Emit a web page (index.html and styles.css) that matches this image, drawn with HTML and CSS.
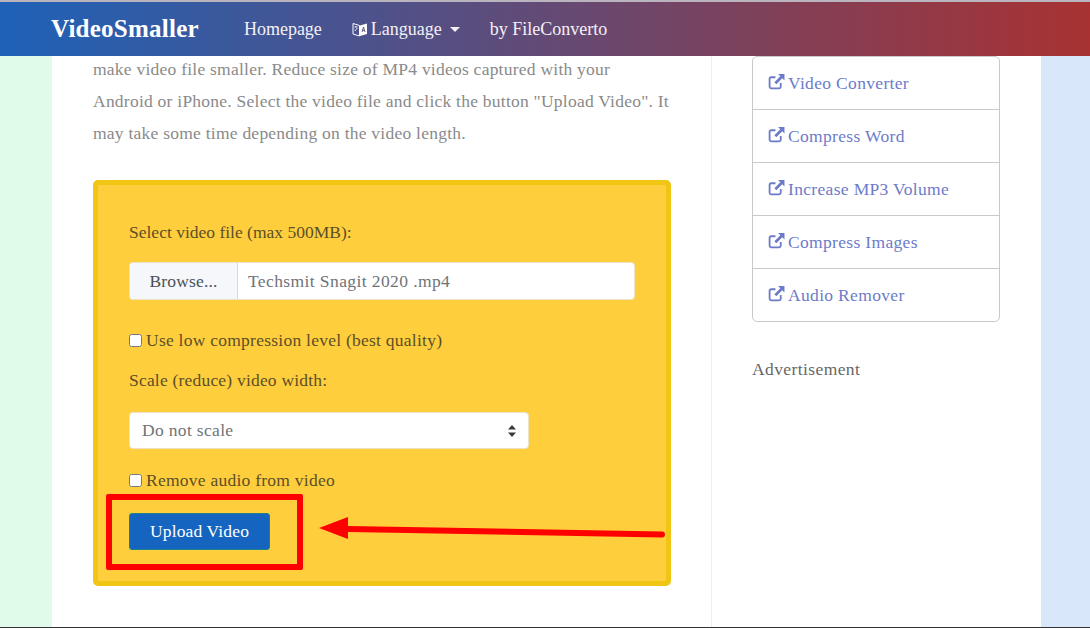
FILE: index.html
```html
<!DOCTYPE html>
<html lang="en">
<head>
    <meta charset="UTF-8">
    <title>VideoSmaller</title>
    <link rel="stylesheet" href="styles.css">
</head>
<body>
    <nav class="navbar">
        <a class="brand">VideoSmaller</a>
        <a class="nav-link">Homepage</a>
        <a class="nav-link lang-link">
            <svg class="lang-icon" viewBox="0 0 16 16" width="16" height="16">
                <path d="M1 2.5 L7.5 4.5 V15 L1 13 Z" fill="none" stroke="#fff" stroke-width="1"/>
                <path d="M8 4.5 L15 2.5 V13 L8 15 Z" fill="#fff"/>
                <path d="M2.5 6 h3 M4 5 v1 M2.8 10 l2.5 -3" fill="none" stroke="#fff" stroke-width="0.9"/>
                <path d="M10 11 l1.5 -5 l1.5 5 M10.6 9.4 h1.9" fill="none" stroke="#5a4a80" stroke-width="0.9"/>
            </svg>
            Language <span class="caret"></span>
        </a>
        <a class="nav-link">by FileConverto</a>
    </nav>

    <div class="page">
        <div class="side side-green"></div>

        <div class="center">
            <main class="main">
                <p class="intro">make video file smaller. Reduce size of MP4 videos captured with your<br>
                Android or iPhone. Select the video file and click the button "Upload Video". It<br>
                may take some time depending on the video length.</p>

                <form class="upload-card">
                    <label class="field-label">Select video file (max 500MB):</label>
                    <div class="file-input">
                        <span class="file-btn">Browse...</span>
                        <span class="file-name">Techsmit Snagit 2020 .mp4</span>
                    </div>

                    <label class="check-row"><input type="checkbox">Use low compression level (best quality)</label>

                    <label class="field-label scale-label">Scale (reduce) video width:</label>
                    <div class="select-box">
                        <span>Do not scale</span>
                        <svg viewBox="0 0 8 12" width="8" height="12">
                            <path d="M4 0 L8 4.5 H0 Z M4 12 L0 7.5 H8 Z" fill="#343a40"/>
                        </svg>
                    </div>

                    <label class="check-row audio-row"><input type="checkbox">Remove audio from video</label>

                    <button type="button" class="upload-btn">Upload Video</button>
                </form>
            </main>

            <aside class="sidebar">
                <ul class="link-list">
                    <li><a><svg class="ext-icon" viewBox="0 0 16 16"><use href="#ext"/></svg>Video Converter</a></li>
                    <li><a><svg class="ext-icon" viewBox="0 0 16 16"><use href="#ext"/></svg>Compress Word</a></li>
                    <li><a><svg class="ext-icon" viewBox="0 0 16 16"><use href="#ext"/></svg>Increase MP3 Volume</a></li>
                    <li><a><svg class="ext-icon" viewBox="0 0 16 16"><use href="#ext"/></svg>Compress Images</a></li>
                    <li><a><svg class="ext-icon" viewBox="0 0 16 16"><use href="#ext"/></svg>Audio Remover</a></li>
                </ul>
                <p class="ad-label">Advertisement</p>
            </aside>
        </div>

        <div class="side side-blue"></div>
    </div>

    <!-- annotation drawn on top of the screenshot -->
    <div class="mark-box"></div>
    <svg class="mark-arrow" viewBox="0 0 360 30" width="360" height="30">
        <path d="M30 14 L344 19.5" fill="none" stroke="#f00" stroke-width="6" stroke-linecap="round"/>
        <path d="M1 13 L30 2 V24 Z" fill="#f00"/>
    </svg>
    <div class="bottom-line"></div>

    <svg width="0" height="0" class="defs">
        <symbol id="ext" viewBox="0 0 16 16">
            <path d="M12 9.5 V13 a1.5 1.5 0 0 1 -1.5 1.5 H3 A1.5 1.5 0 0 1 1.5 13 V5.5 A1.5 1.5 0 0 1 3 4 H7" fill="none" stroke="currentColor" stroke-width="1.7"/>
            <path d="M9.5 1 H15.5 V7 L13.4 4.9 L7.8 10.5 L6 8.7 L11.6 3.1 Z" fill="currentColor"/>
        </symbol>
    </svg>
</body>
</html>
```

FILE: styles.css
```css
* {
    margin: 0;
    padding: 0;
    box-sizing: border-box;
}

html, body {
    height: 628px;
    overflow: hidden;
}

body {
    font-family: 'Liberation Serif', 'Times New Roman', serif;
    font-size: 17.5px;
    background: white;
    position: relative;
}

.navbar {
    position: relative;
    z-index: 2;
    height: 56px;
    border-top: 2px solid #b9b4bd;
    background: linear-gradient(90deg, #1e62b8 0%, #a83232 100%);
    display: flex;
    align-items: center;
    padding-left: 51px;
    color: white;
}

.brand {
    font-size: 25px;
    font-weight: 700;
    letter-spacing: 0.25px;
    margin-right: 45px;
}

.nav-link {
    font-size: 18px;
    margin-right: 30px;
    color: #f4f0f6;
}

.lang-link {
    display: flex;
    align-items: center;
}

.lang-icon {
    margin-right: 3px;
}

.caret {
    display: inline-block;
    margin-left: 8px;
    border-top: 5px solid #f4f0f6;
    border-left: 5px solid transparent;
    border-right: 5px solid transparent;
}

.page {
    display: flex;
    height: 572px;
}

.side-green {
    width: 52px;
    background: #e0fbe9;
}

.side-blue {
    width: 49px;
    background: #d9e7fa;
}

.center {
    width: 989px;
    display: flex;
    background: white;
}

.main {
    width: 660px;
    padding-left: 41px;
    padding-right: 40px;
    border-right: 1px solid #eeeeee;
}

.intro {
    color: #8a8a8a;
    line-height: 32px;
    margin-top: -3px;
    white-space: nowrap;
    letter-spacing: 0.24px;
}

.upload-card {
    margin-top: 31px;
    width: 578px;
    height: 406px;
    padding: 35px 31px 0;
    background: #ffce3d;
    border: 5px solid #f0c514;
    border-radius: 5px;
    color: #5c4e28;
}

.field-label {
    display: block;
    line-height: 24px;
}

.file-input {
    margin-top: 18px;
    width: 506px;
    height: 38px;
    display: flex;
    background: white;
    border: 1px solid #ebe3c8;
    border-radius: 4px;
    overflow: hidden;
}

.file-btn {
    width: 108px;
    background: #f5f7fa;
    border-right: 1px solid #d5dae0;
    color: #495057;
    text-align: center;
    line-height: 36px;
    letter-spacing: 0.15px;
}

.file-name {
    padding-left: 10px;
    color: #6f7378;
    line-height: 36px;
    letter-spacing: 0.4px;
}

.check-row {
    display: flex;
    align-items: center;
    margin-top: 28px;
    line-height: 24px;
    letter-spacing: 0.25px;
}

.check-row input {
    width: 13px;
    height: 13px;
    margin-right: 4px;
}

.scale-label {
    margin-top: 16px;
    letter-spacing: 0.2px;
}

.select-box {
    margin-top: 20px;
    width: 400px;
    height: 37px;
    display: flex;
    align-items: center;
    justify-content: space-between;
    padding: 0 12px 0 12px;
    background: white;
    border: 1px solid #ebe3c8;
    border-radius: 4px;
    color: #6f7378;
    letter-spacing: 0.33px;
}

.audio-row {
    margin-top: 19px;
}

.upload-btn {
    display: block;
    margin-top: 21px;
    width: 141px;
    height: 37px;
    background: #1565c0;
    border: 1px solid #1f7f8c;
    border-radius: 3px;
    color: white;
    font-family: inherit;
    font-size: 17.5px;
    letter-spacing: 0.15px;
}

.sidebar {
    margin-left: 40px;
    width: 248px;
}

.link-list {
    list-style: none;
    border: 1px solid #c9c9c9;
    border-radius: 5px;
}

.link-list li {
    height: 53px;
    padding-left: 15px;
    display: flex;
    align-items: center;
    border-top: 1px solid #c9c9c9;
    color: #6c7bc9;
    letter-spacing: 0.33px;
}

.link-list li:first-child {
    height: 52px;
    border-top: none;
}

.link-list a {
    display: flex;
    align-items: center;
}

.ext-icon {
    width: 17px;
    height: 17px;
    margin-right: 3px;
    margin-top: -3px;
}

.ad-label {
    margin-top: 35px;
    color: #666;
    line-height: 24px;
    letter-spacing: 0.4px;
}

.defs {
    position: absolute;
}

.mark-box {
    position: absolute;
    left: 106px;
    top: 494px;
    width: 197px;
    height: 76px;
    border: 6px solid #f00;
    border-radius: 2px;
}

.mark-arrow {
    position: absolute;
    left: 318px;
    top: 515px;
}

.bottom-line {
    position: absolute;
    left: 0;
    right: 0;
    bottom: 0;
    height: 1px;
    background: #333;
}
```
